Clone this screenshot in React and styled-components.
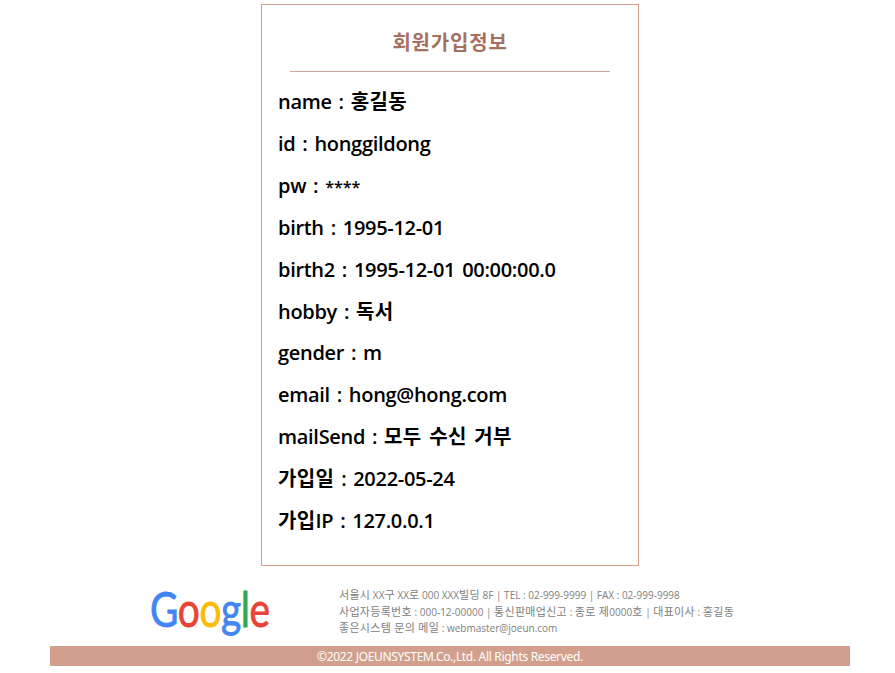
import React from "react";
import styled, { createGlobalStyle } from "styled-components";

const Global = createGlobalStyle`
  html, body { margin: 0; padding: 0; background: #fff; overflow: hidden; }
  body { font-family: "Open Sans", "Noto Sans CJK KR", sans-serif; }
`;
const Page = styled.div`width: 900px; height: 673px; display: flex; flex-direction: column; align-items: center;`;
const Card = styled.section`
  box-sizing: border-box; width: 378px; height: 562px; margin-top: 4px; border: 1px solid #d59f8e;
  padding: 0 16px; display: flex; flex-direction: column;
`;
const Title = styled.h2`
  margin: 0 12px; height: 67px; box-sizing: border-box; border-bottom: 1px solid #c9a698;
  font-size: 20px; font-weight: 700; letter-spacing: 0.8px; color: #a6705f; text-align: center; line-height: 76px;
`;
const Rows = styled.div`padding-top: 9.4px;`;
const Row = styled.p`margin: 0; height: 41.85px; line-height: 42px; font-size: 20px; font-weight: 600; letter-spacing: -0.3px; word-spacing: 2px; color: #000; white-space: nowrap;`;
const Ko = styled.span`letter-spacing: 0.35px;`;
const Stars = styled.span`font-size: 16px; letter-spacing: 0;`;
const Footer = styled.footer`width: 800px; margin-top: 20px; display: flex; flex-direction: column;`;
const FootTop = styled.div`display: flex; height: 60px;`;
const LogoBox = styled.div`width: 289px; padding-left: 100px; box-sizing: border-box;`;
const Logo = styled.span`display: inline-block; font: 400 48px/46px "Lato", sans-serif; letter-spacing: -0.5px; -webkit-text-stroke: 0.8px currentColor; transform: scaleX(0.81); transform-origin: left center;`;
const Letter = styled.span`color: ${p => p.$c};`;
const Info = styled.div`font-size: 10px; line-height: 16.5px; color: #808080; padding-top: 1px; white-space: nowrap;`;
const InfoKo = styled.span`font-size: 11px; letter-spacing: 0.3px;`;
const Copy = styled.div`height: 20px; background: #d29f8d; color: #fff; font-family: "Noto Sans", sans-serif; font-size: 12px; letter-spacing: -0.32px; line-height: 22px; text-align: center;`;

const rows = [
  <>name : <Ko>홍길동</Ko></>, "id : honggildong", <>pw : <Stars>****</Stars></>, "birth : 1995-12-01",
  "birth2 : 1995-12-01 00:00:00.0", <>hobby : <Ko>독서</Ko></>, "gender : m", "email : hong@hong.com",
  <>mailSend : <Ko>모두 수신 거부</Ko></>, <><Ko>가입일</Ko> : 2022-05-24</>, <><Ko>가입</Ko>IP : 127.0.0.1</>
];
const letters = [["G","#4285f4"],["o","#ea4335"],["o","#fbbc05"],["g","#4285f4"],["l","#34a853"],["e","#ea4335"]];
export default function App(){return <><Global/><Page>
<Card><Title>회원가입정보</Title><Rows>{rows.map((r,i)=><Row key={i}>{r}</Row>)}</Rows></Card>
<Footer><FootTop><LogoBox><Logo>{letters.map(([l,c],i)=><Letter key={i} $c={c}>{l}</Letter>)}</Logo></LogoBox>
<Info><InfoKo>서울시</InfoKo> XX<InfoKo>구</InfoKo> XX<InfoKo>로</InfoKo> 000 XXX<InfoKo>빌딩</InfoKo> 8F | TEL : 02-999-9999 | FAX : 02-999-9998<br/>
<InfoKo>사업자등록번호</InfoKo> : 000-12-00000 | <InfoKo>통신판매업신고</InfoKo> : <InfoKo>종로 제</InfoKo>0000<InfoKo>호</InfoKo> | <InfoKo>대표이사</InfoKo> : <InfoKo>홍길동</InfoKo><br/>
<InfoKo>좋은시스템 문의 메일</InfoKo> : webmaster@joeun.com</Info></FootTop>
<Copy>©2022 JOEUNSYSTEM.Co.,Ltd. All Rights Reserved.</Copy></Footer>
</Page></>}
